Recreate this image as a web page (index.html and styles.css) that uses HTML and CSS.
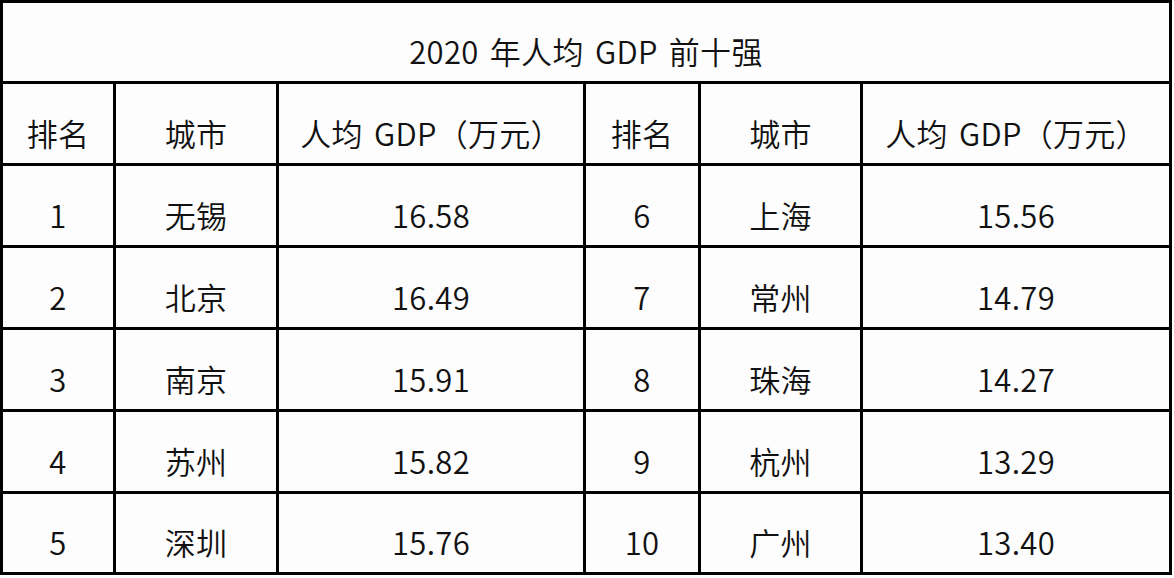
FILE: index.html
```html
<!DOCTYPE html>
<html lang="zh-CN">
<head>
<meta charset="utf-8">
<title>2020 年人均 GDP 前十强</title>
<link rel="stylesheet" href="styles.css">
</head>
<body>
<div class="table">
  <div class="cell title">2020 年人均 GDP 前十强</div>
  <div class="cell">排名</div><div class="cell">城市</div><div class="cell">人均 GDP（万元）</div>
  <div class="cell">排名</div><div class="cell">城市</div><div class="cell">人均 GDP（万元）</div>
  <div class="cell">1</div><div class="cell">无锡</div><div class="cell">16.58</div>
  <div class="cell">6</div><div class="cell">上海</div><div class="cell">15.56</div>
  <div class="cell">2</div><div class="cell">北京</div><div class="cell">16.49</div>
  <div class="cell">7</div><div class="cell">常州</div><div class="cell">14.79</div>
  <div class="cell">3</div><div class="cell">南京</div><div class="cell">15.91</div>
  <div class="cell">8</div><div class="cell">珠海</div><div class="cell">14.27</div>
  <div class="cell">4</div><div class="cell">苏州</div><div class="cell">15.82</div>
  <div class="cell">9</div><div class="cell">杭州</div><div class="cell">13.29</div>
  <div class="cell">5</div><div class="cell">深圳</div><div class="cell">15.76</div>
  <div class="cell">10</div><div class="cell">广州</div><div class="cell">13.40</div>
</div>
</body>
</html>
```
FILE: styles.css
```css
html, body {
  margin: 0;
  padding: 0;
  background: #ffffff;
}
.table {
  width: 1172px;
  box-sizing: border-box;
  background: #000;
  padding: 3px;
  display: grid;
  grid-template-columns: 110px 160px 304px 112px 159px 306px;
  grid-template-rows: 78px repeat(5, 79px) 78px;
  gap: 3px;
  font-family: "Noto Sans CJK SC", "Noto Sans", sans-serif;
  font-size: 31px;
  font-weight: 350;
  word-spacing: 4px;
  letter-spacing: 0.3px;
  color: #111;
}
.cell {
  background: #fdfdfd;
  display: flex;
  align-items: center;
  justify-content: center;
  padding-top: 17px;
  box-sizing: border-box;
  line-height: 1;
}
.title {
  grid-column: 1 / -1;
}
```
